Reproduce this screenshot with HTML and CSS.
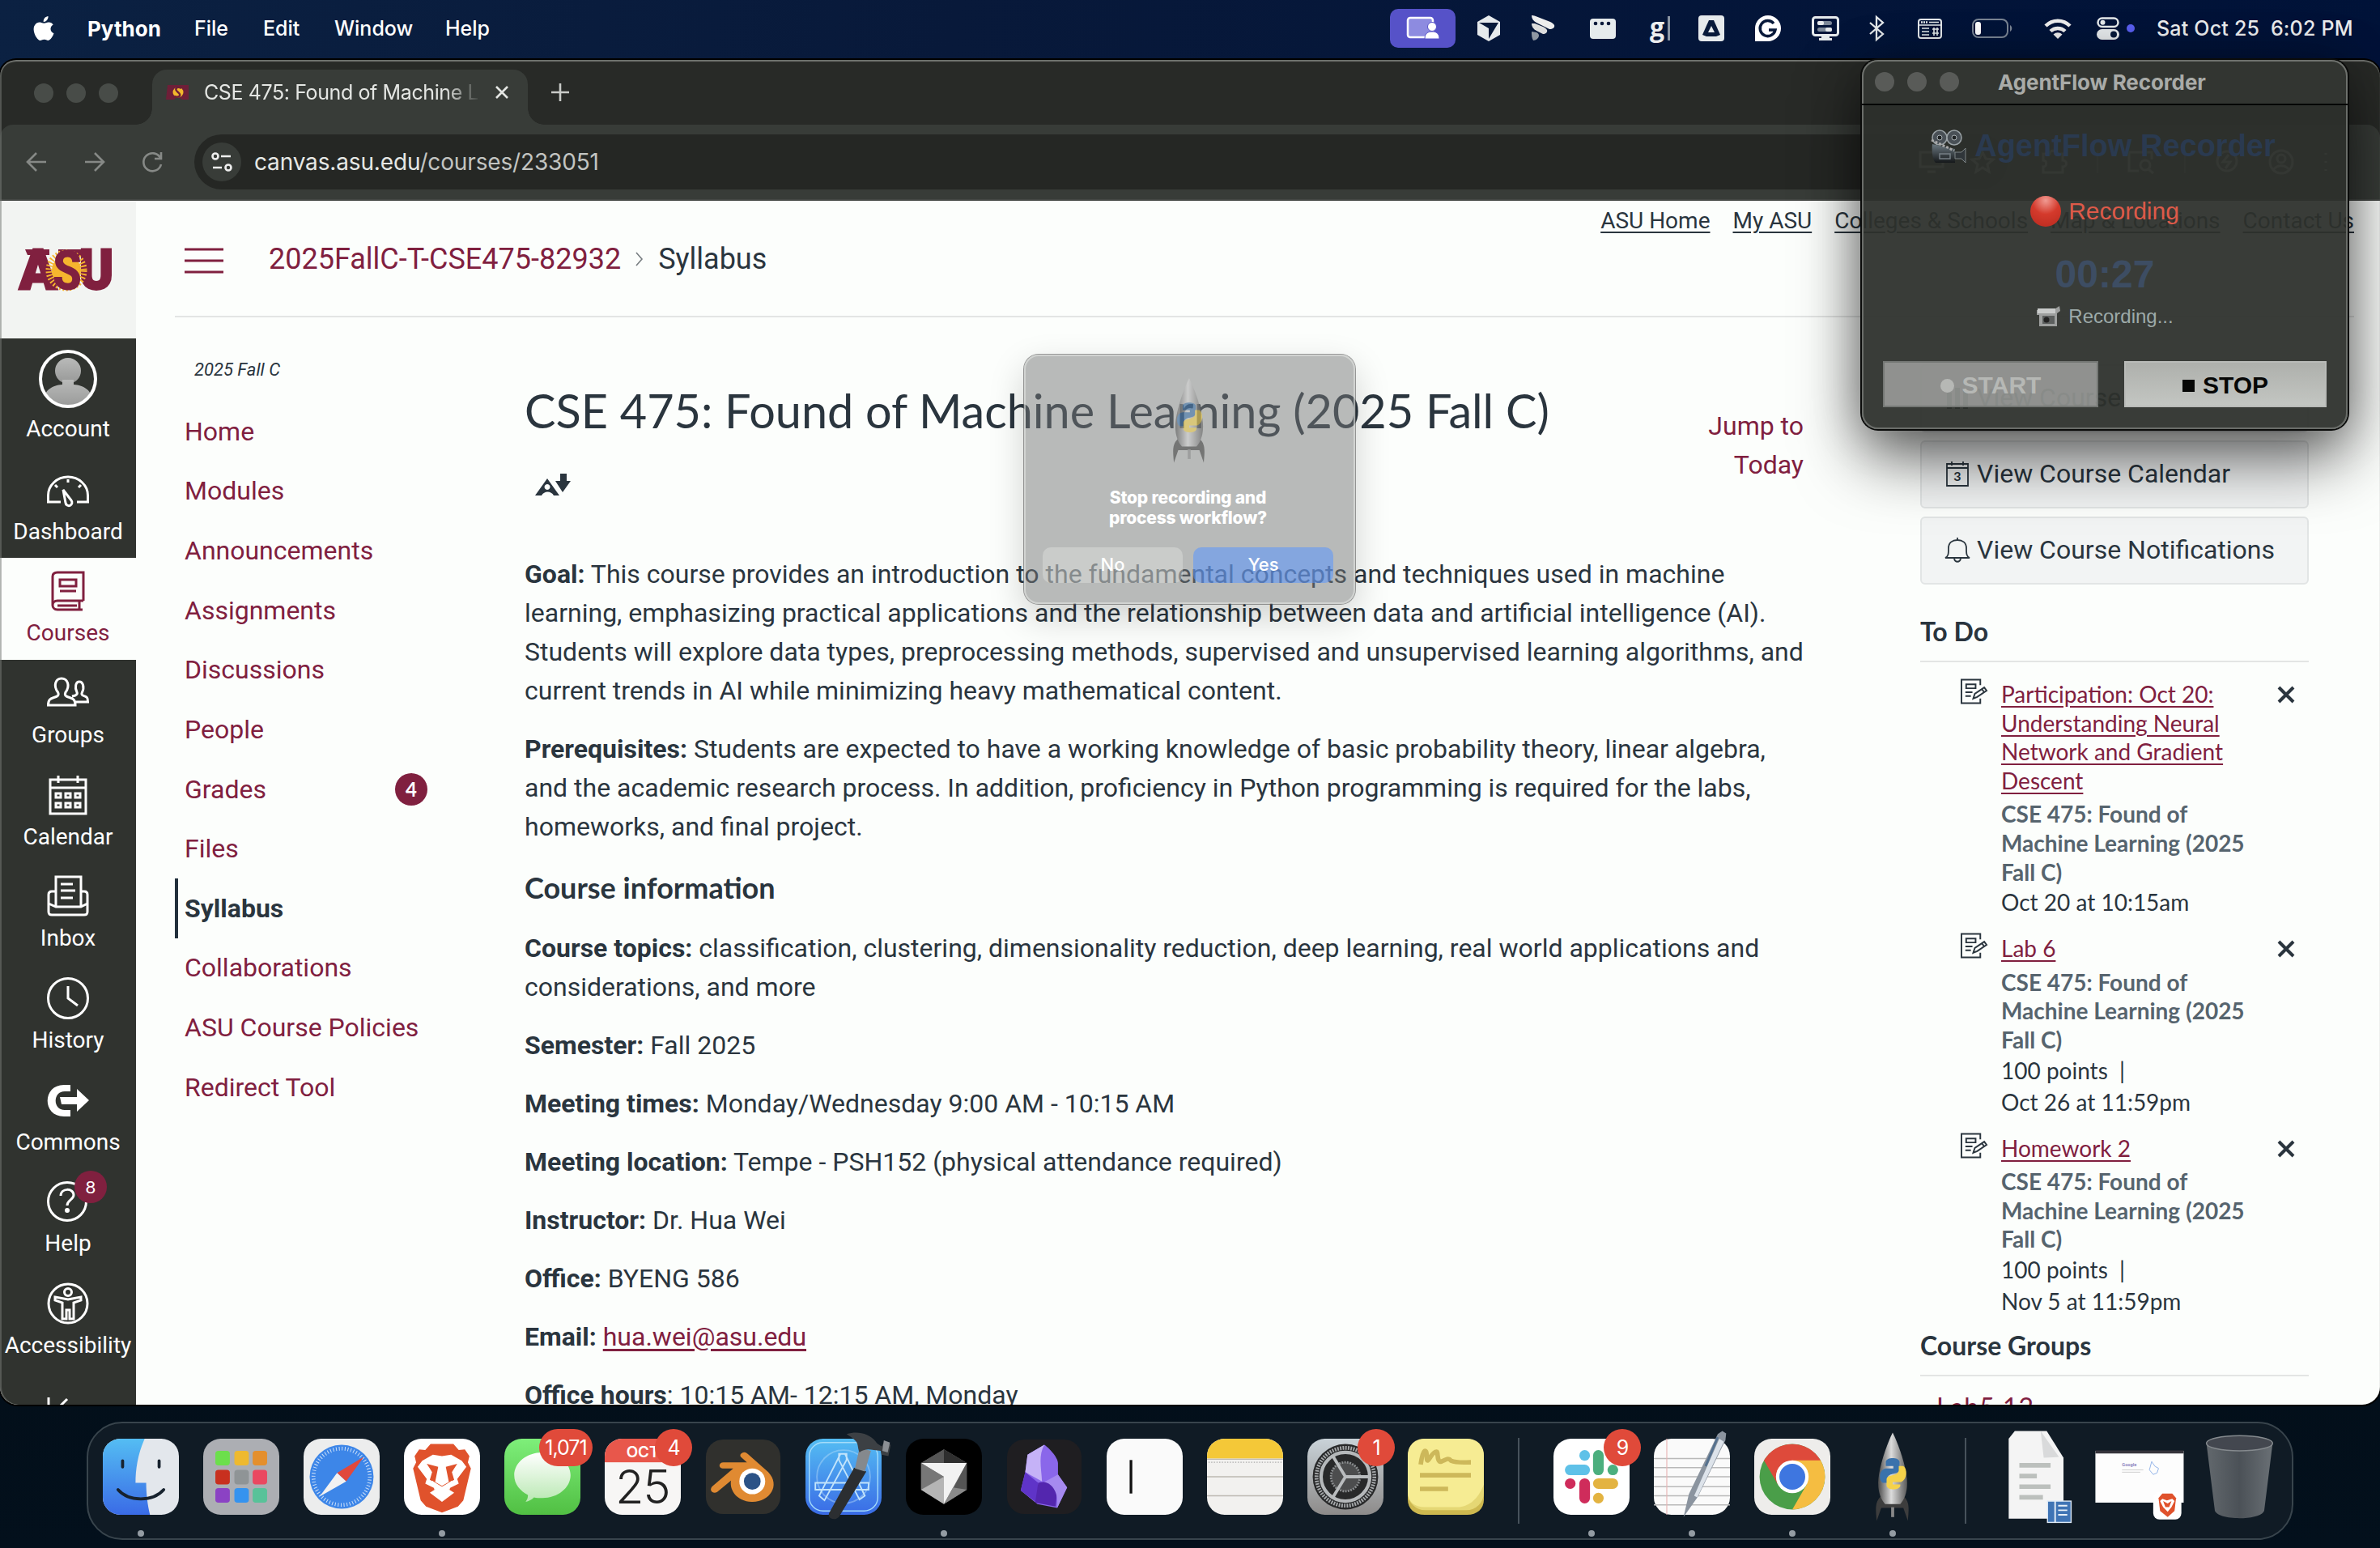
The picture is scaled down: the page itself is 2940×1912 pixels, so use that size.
FILE: index.html
```html
<!DOCTYPE html>
<html lang="en">
<head>
<meta charset="utf-8">
<title>CSE 475: Found of Machine Learning - Syllabus</title>
<link rel="stylesheet" href="styles.css">
</head>
<body>
<header class="menubar">
  <nav class="menus">
    <svg class="apple" viewBox="0 0 26 31" fill="#fff"><path d="M18.500 0c.3 2-.6 3.700-1.600 4.900-1.100 1.300-2.600 2.100-4.200 2-.2-1.900.6-3.600 1.600-4.800C15.400.9 17.100.1 18.500 0zM24.700 10.500c-2.100 1.300-3.200 3-3.200 5.200 0 2.500 1.500 4.600 4 5.500-.6 1.900-1.500 3.700-2.700 5.400-1.200 1.700-2.500 3.400-4.400 3.400s-2.500-1.200-4.800-1.200-3 1.200-4.800 1.200c-1.900.1-3.400-1.800-4.600-3.500C1 22-.9 14.300 2.200 10.700c1.400-2 3.600-3.200 5.900-3.200 2 0 3.700 1.300 5.200 1.300s3.600-1.500 6.200-1.300c2 .1 4 1.100 5.200 3z"/></svg>
    <b class="m-app">Python</b><span class="m-file">File</span><span class="m-edit">Edit</span><span class="m-win">Window</span><span class="m-help">Help</span>
  </nav>
  <div class="status">
    <div class="slot s81"><div class="share"><svg width="42" height="30" viewBox="0 0 42 30"><rect x="2" y="2" width="31" height="24" rx="3" fill="#8d8be0" stroke="#fff" stroke-width="2.500"/><circle cx="32" cy="13" r="5.500" fill="#fff" stroke="#5652c8"/><path d="M23 28c0-7 4-9 9-9s9 2 9 9z" fill="#fff" stroke="#5652c8"/></svg></div></div>
    <div class="slot s80"><svg width="30" height="32" viewBox="0 0 30 32"><path d="M15 0l14 8v16l-14 8-14-8V8z" fill="#e6eaec"/><path d="M3 9h24L15 29V16z" fill="#07193a"/></svg></div>
    <div class="slot s55"><svg width="32" height="32" viewBox="0 0 32 32"><path d="M1 0c0 4 2 7 6 9l16 8c4 0 7-2 6-5-1-2-3-3-5-4L6 1C4 0 2 0 1 0z" fill="#eee"/><path d="M1 10c0 4 2 7 6 9l8 4c3 0 6-2 5-5-1-2-3-3-5-4L5 10z" fill="#ddd"/><path d="M1 20c0 4 0 8 2 11 3 0 7-3 7-6 0-2-1-3-3-4z" fill="#8f97a3"/></svg></div>
    <div class="slot s95"><svg width="32" height="25" viewBox="0 0 32 25"><rect width="32" height="25" rx="4" fill="#e6eaec"/><g fill="#07193a"><circle cx="7" cy="6" r="2.300"/><circle cx="15" cy="6" r="2.300"/><circle cx="23" cy="6" r="2.300"/></g></svg></div>
    <div class="slot s45 gbar">g<i></i></div>
    <div class="slot s83"><svg width="32" height="32" viewBox="0 0 32 32"><rect width="32" height="32" rx="4" fill="#e6eaec"/><path d="M13 6h6l8 18-5 2H10l-5-2z" fill="#07193a"/><path d="M16 13l4 8h-8z" fill="#e6eaec"/></svg></div>
    <div class="slot s57"><svg width="32" height="32" viewBox="0 0 32 32"><path d="M16 0a16 16 0 1 1 0 32H0V16A16 16 0 0 1 16 0z" fill="#fff"/><path d="M23 10a9.500 9.500 0 1 0 2 8h-8" fill="none" stroke="#07193a" stroke-width="3.500"/></svg></div>
    <div class="slot s83"><svg width="34" height="30" viewBox="0 0 34 30"><rect x="1.500" y="1.500" width="31" height="22" rx="3" fill="none" stroke="#e6eaec" stroke-width="3"/><path d="M12 25h10v2h3v3H9v-3h3z" fill="#e6eaec"/><g fill="#7d8998"><rect x="7" y="6" width="18" height="5" rx="2.500"/><rect x="7" y="14" width="18" height="5" rx="2.500"/></g><g fill="#e6eaec"><rect x="7" y="6" width="8" height="5" rx="2"/><rect x="17" y="14" width="8" height="5" rx="2"/></g></svg></div>
    <div class="slot s44"><svg width="20" height="30" viewBox="0 0 20 30"><path d="M2 8l16 14-8 7V1l8 7L2 22" fill="none" stroke="#e6eaec" stroke-width="2.300"/></svg></div>
    <div class="slot s92"><svg width="30" height="25" viewBox="0 0 30 25"><rect x="1" y="1" width="28" height="23" rx="3" fill="none" stroke="#e6eaec" stroke-width="2"/><path d="M4 4.500h8" stroke="#e6eaec" stroke-width="2.500" stroke-dasharray="2 1"/><path d="M14 4.500h12M1 8h28" stroke="#e6eaec" stroke-width="1.500"/><path d="M5 12h9M5 16h9M5 20h9M18 13h8M18 18h8M20 11v10M24 11v10" stroke="#e6eaec" stroke-width="1.600"/></svg></div>
    <div class="slot s60"><svg width="50" height="24" viewBox="0 0 50 24"><rect x="1" y="1" width="43" height="22" rx="7" fill="none" stroke="#7a8594" stroke-width="2"/><path d="M47 8c3 1.500 3 6.500 0 8z" fill="#7a8594"/><rect x="4" y="4" width="7" height="16" rx="3" fill="#fff"/></svg></div>
    <div class="slot s102"><svg width="34" height="25" viewBox="0 0 34 25"><g fill="none" stroke="#eee" stroke-width="4.500"><path d="M2 9a21 21 0 0 1 30 0"/><path d="M8 15.500a13 13 0 0 1 18 0"/></g><path d="M11.500 19.500a8 8 0 0 1 11 0L17 25z" fill="#eee"/></svg></div>
    <div class="slot s22"><svg width="28" height="28" viewBox="0 0 28 28"><rect x="1.500" y="1.500" width="25" height="10.500" rx="5.200" fill="none" stroke="#e6eaec" stroke-width="2.500"/><circle cx="7.500" cy="6.700" r="3" fill="#e6eaec"/><rect y="15" width="28" height="13" rx="6.500" fill="#e6eaec"/><circle cx="21" cy="21.500" r="4" fill="#07193a"/></svg></div>
    <div class="slot s35"><i class="bluedot"></i></div>
    <span class="clock">Sat Oct 25&nbsp; 6:02 PM</span>
  </div>
</header>

<main class="browser">
  <div class="tabstrip">
    <div class="lights"><i></i><i></i><i></i></div>
    <div class="tab">
      <svg class="fav" width="30" height="18" viewBox="0 0 30 18"><path d="M2 0h26v18H20l-6-4-4 4H0z" fill="#6e1f38"/><circle cx="15" cy="9" r="6.500" fill="#f2b92c"/><path d="M19 4c-6-3-9 1-4 5s1 7-5 5" fill="none" stroke="#6e1f38" stroke-width="2.500"/></svg>
      <span class="tabtitle">CSE 475: Found of Machine L</span>
      <svg class="tabx" width="16" height="16" viewBox="0 0 16 16"><path d="M1 1l14 14M15 1L1 15" stroke="#e4e6e3" stroke-width="2.600"/></svg>
    </div>
    <svg class="plus" width="22" height="22" viewBox="0 0 22 22"><path d="M11 0v22M0 11h22" stroke="#c9cbc8" stroke-width="2.600"/></svg>
  </div>
  <div class="toolbar">
    <svg class="navi" viewBox="0 0 28 28"><path d="M26 14H3M14 3L3 14l11 11"/></svg>
    <svg class="navi" viewBox="0 0 28 28"><path d="M2 14h23M14 3l11 11-11 11"/></svg>
    <svg class="navi" viewBox="0 0 28 28"><path d="M24 9A11 11 0 1 0 25 17M25 2v8h-8"/></svg>
    <div class="omni">
      <span class="site"><svg width="26" height="24" viewBox="0 0 26 24" fill="none" stroke="#eee" stroke-width="2.600"><circle cx="5" cy="5" r="3.500"/><path d="M12 5h12M2 19h11"/><circle cx="21" cy="19" r="3.500"/></svg></span>
      <span class="url">canvas.asu.edu<em>/courses/233051</em></span>
      <span class="omni-end">
        <svg width="32" height="30" viewBox="0 0 32 30"><path d="M20 3H2v18h28V14M11 27h10M25 2v10M20 8l5 5 5-5"/></svg>
        <svg width="30" height="30" viewBox="0 0 30 30"><path d="M15 3l4 8 9 1-7 6 2 9-8-5-8 5 2-9-7-6 9-1z"/></svg>
      </span>
    </div>
    <div class="exts">
      <svg width="32" height="30" viewBox="0 0 32 30"><path d="M2 5h8c0-5 8-5 8 0h8v8c6 0 6 8 0 8v7H2v-7c5 0 5-8 0-8z"/></svg><i></i>
      <svg width="34" height="30" viewBox="0 0 34 30"><path d="M14 26H2V3h28v9"/><circle cx="22" cy="19" r="6"/><path d="M26 24l6 5"/></svg><i></i>
      <svg width="30" height="30" viewBox="0 0 30 30"><circle cx="15" cy="14" r="12"/><path d="M17 6l-7 9h9l-6 8"/></svg>
      <svg width="32" height="32" viewBox="0 0 32 32"><circle cx="16" cy="16" r="14"/><circle cx="16" cy="12" r="5"/><path d="M6 26c5-7 15-7 20 0"/></svg>
      <svg width="6" height="28" viewBox="0 0 6 28"><path d="M3 3v2M3 13v2M3 23v2"/></svg>
    </div>
  </div>

  <div class="page">
    <nav class="global">
      <a class="logo"><svg width="120" height="54" viewBox="0 0 120 54">
        <g font-family="Roboto, sans-serif" font-weight="900" font-size="68" fill="#80203f" stroke="#80203f" stroke-width="3">
          <text x="0" y="50" textLength="46" lengthAdjust="spacingAndGlyphs">A</text><text x="74" y="50" textLength="42" lengthAdjust="spacingAndGlyphs">U</text></g>
        <path d="M7 1h30v7H10zM48 1h36v8H48z" fill="#80203f"/>
        <circle cx="58" cy="27" r="18" fill="#f6b52e"/><circle cx="58" cy="27" r="21.500" fill="none" stroke="#f6b52e" stroke-width="8" stroke-dasharray="1.800 2.200"/>
        <text x="41" y="51" font-family="Roboto, sans-serif" font-weight="900" font-size="68" fill="#80203f" textLength="36" lengthAdjust="spacingAndGlyphs">S</text>
      </svg></a>
      <a class="g acct"><svg viewBox="0 0 72 72"><defs><clipPath id="av"><circle cx="36" cy="36" r="33"/></clipPath><linearGradient id="avg" x2="0" y2="1"><stop stop-color="#b9bab9"/><stop offset="1" stop-color="#979897"/></linearGradient></defs><g clip-path="url(#av)" fill="url(#avg)"><circle cx="36" cy="26" r="16"/><path d="M4 72c0-22 12-28 25-29v-6h14v6c13 1 25 7 25 29z"/></g><circle cx="36" cy="36" r="34" fill="none" stroke="#fff" stroke-width="4"/></svg><span>Account</span></a>
      <a class="g"><svg viewBox="0 0 52 52"><path d="M17 41H1.500V33a24.500 23 0 0 1 49 0v8H37M20 26l10 13a4 4 0 1 1-7 3zM10 20l3 3M42 20l-3 3M26 13v4"/></svg><span>Dashboard</span></a>
      <a class="g on"><svg viewBox="0 0 52 52"><path d="M45 38V3H13c-4 0-6 2-6 5v36M45 38H13c-8 0-8 11 0 11h31M40 39v9M13 44h24M16 12h20v8H16zM16 26h20"/></svg><span>Courses</span></a>
      <a class="g"><svg viewBox="0 0 52 52"><path d="M1.500 41c0-9 4-8 11-11 2-1 2-3 1-5-6-8-3-17 4.500-17S29 17 23 25c-1 2-1 4 1 5 7 3 11 2 11 11zM35 37h15.500c0-7-2-6-6-8-2-1-2-2-1-4 3-6 1-13-3.500-13s-6 7-3 13c1 2 0 3-2 4l-4 1"/></svg><span>Groups</span></a>
      <a class="g"><svg viewBox="0 0 52 52"><path d="M4 7h44v42H4zM4 17h44M14 2v9M38 2v9"/><path d="M11 24h6v5h-6zM23 24h6v5h-6zM35 24h6v5h-6zM11 36h6v5h-6zM23 36h6v5h-6zM35 36h6v5h-6z"/></svg><span>Calendar</span></a>
      <a class="g"><svg viewBox="0 0 52 52"><path d="M11 38V2h31v36M17 11h15M17 19h18M17 28h15M11 20H6c-3 0-4 2-4 4v21c0 3 1 4 4 4h40c3 0 4-1 4-4V24c0-2-1-4-4-4h-4M2 35l9 4h31l8-4"/></svg><span>Inbox</span></a>
      <a class="g"><svg viewBox="0 0 52 52"><circle cx="26" cy="26" r="24.500"/><path d="M26 11v15l12 9"/></svg><span>History</span></a>
      <a class="g"><svg viewBox="0 0 52 52"><path class="solid" d="M29 7H21C-6 7-6 46 21 46h8v-8h-7c-15 0-15-23 0-23h7zM16 22h21v-10l15 14-15 14V31H18z"/></svg><span>Commons</span></a>
      <a class="g"><svg viewBox="0 0 52 52"><circle cx="25" cy="26" r="23.500"/><path d="M17 19c0-10 16-10 16-1 0 6-8 6-8 13"/><circle class="solid" cx="25" cy="37" r="3"/></svg><span>Help</span><b class="badge">8</b></a>
      <a class="g"><svg viewBox="0 0 52 52"><circle cx="26" cy="26" r="24"/><circle cx="26" cy="12" r="4.500"/><path d="M10 18l16 3 16-3v4l-9 3v20h-5V34h-4v11h-5V25l-9-3z"/></svg><span>Accessibility</span></a>
      <a class="g"><svg viewBox="0 0 52 52"><path d="M2 16v34M12 31L25 18"/></svg></a>
    </nav>

    <div class="doc">
      <div class="crumbs">
        <svg class="burger" width="48" height="32" viewBox="0 0 48 32"><path d="M0 2h48M0 16h48M0 30h48" stroke="#80203f" stroke-width="3"/></svg>
        <a class="c1">2025FallC-T-CSE475-82932</a><svg width="10" height="18" viewBox="0 0 10 18"><path d="M1 1l7 8-7 8" fill="none" stroke="#777d80" stroke-width="1.600"/></svg><span class="c2">Syllabus</span>
        <div class="toplinks"><a class="l1">ASU Home</a><a class="l2">My ASU</a><a class="l3">Colleges &amp; Schools</a><a class="l4">Map &amp; Locations</a><a class="l5">Contact Us</a></div>
      </div>
      <div class="cols">
        <nav class="course">
          <div class="term">2025 Fall C</div>
          <a>Home</a><a>Modules</a><a>Announcements</a><a>Assignments</a><a>Discussions</a><a>People</a><a>Grades<b class="badge2">4</b></a><a>Files</a><a class="cur">Syllabus</a><a>Collaborations</a><a>ASU Course Policies</a><a>Redirect Tool</a>
        </nav>
        <article class="content">
          <div class="head"><div><h1>CSE 475: Found of Machine Learning (2025 Fall C)</h1>
            <svg class="ally" width="44" height="28" viewBox="0 0 44 28"><path fill-rule="evenodd" d="M0 27L15 6l15 21h-7c-3-6-12-6-15 0zM15 13a3.500 3.500 0 1 0 .1 0zM31 0h8v9h5L34 23 25 9h6z" fill="#2a353e"/></svg></div>
            <a class="jump">Jump to<br>Today</a></div>
          <p><b>Goal:</b> This course provides an introduction to the fundamental concepts and techniques used in machine<br>learning, emphasizing practical applications and the relationship between data and artificial intelligence (AI).<br>Students will explore data types, preprocessing methods, supervised and unsupervised learning algorithms, and<br>current trends in AI while minimizing heavy mathematical content.</p>
          <p><b>Prerequisites:</b> Students are expected to have a working knowledge of basic probability theory, linear algebra,<br>and the academic research process. In addition, proficiency in Python programming is required for the labs,<br>homeworks, and final project.</p>
          <h3>Course information</h3>
          <p><b>Course topics:</b> classification, clustering, dimensionality reduction, deep learning, real world applications and<br>considerations, and more</p>
          <p><b>Semester:</b> Fall 2025</p>
          <p><b>Meeting times:</b> Monday/Wednesday 9:00 AM - 10:15 AM</p>
          <p><b>Meeting location:</b> Tempe - PSH152 (physical attendance required)</p>
          <p><b>Instructor:</b> Dr. Hua Wei</p>
          <p><b>Office:</b> BYENG 586</p>
          <p><b>Email:</b> <a class="mail">hua.wei@asu.edu</a></p>
          <p><b>Office hours</b>: 10:15 AM- 12:15 AM, Monday</p>
        </article>
        <aside class="right">
          <a class="btn"><svg width="32" height="32" viewBox="0 0 32 32"><path d="M3 10v20h6V10zM13 4v26h6V4zM23 8v22h6V8z" fill="#2a353e"/></svg>View Course Stream</a>
          <a class="btn"><svg width="32" height="32" viewBox="0 0 32 32" fill="none" stroke="#2a353e" stroke-width="1.800"><path d="M3 4h26v27H3zM3 9h26M9 1v5M23 1v5"/><text x="16" y="25" font-family="Lato, sans-serif" font-size="16" font-weight="700" stroke="none" fill="#2a353e" text-anchor="middle">3</text></svg>View Course Calendar</a>
          <a class="btn"><svg width="32" height="32" viewBox="0 0 32 32" fill="none" stroke="#2a353e" stroke-width="1.800"><path d="M1 26h30c-4-2-4-5-4-12 0-7-5-10-11-10S5 7 5 14c0 7 0 10-4 12zM16 1v3M12 27c1 5 7 5 8 0"/></svg>View Course Notifications</a>
          <h2>To Do</h2>
          <div class="todo"><svg class="asg" viewBox="0 0 34 32"><use href="#asg"/></svg><div><a>Participation: Oct 20:<br>Understanding Neural<br>Network and Gradient<br>Descent</a><b>CSE 475: Found of<br>Machine Learning (2025<br>Fall C)</b><span>Oct 20 at 10:15am</span></div><svg class="x" viewBox="0 0 20 20"><use href="#xx"/></svg></div>
          <div class="todo"><svg class="asg" viewBox="0 0 34 32"><use href="#asg"/></svg><div><a>Lab 6</a><b>CSE 475: Found of<br>Machine Learning (2025<br>Fall C)</b><span>100 points &nbsp;|</span><span>Oct 26 at 11:59pm</span></div><svg class="x" viewBox="0 0 20 20"><use href="#xx"/></svg></div>
          <div class="todo"><svg class="asg" viewBox="0 0 34 32"><use href="#asg"/></svg><div><a>Homework 2</a><b>CSE 475: Found of<br>Machine Learning (2025<br>Fall C)</b><span>100 points &nbsp;|</span><span>Nov 5 at 11:59pm</span></div><svg class="x" viewBox="0 0 20 20"><use href="#xx"/></svg></div>
          <h2 class="grp">Course Groups</h2>
          <a class="lab">Lab5 12</a>
        </aside>
      </div>
    </div>
  </div>
</main>
<svg width="0" height="0" class="defs"><defs>
  <g id="asg" fill="none" stroke="#2a353e" stroke-width="2"><path d="M25 8V1H1v30h24v-6M7 7h12v5H7zM6 17h9M6 22h7"/><path d="M16 25l2-6 12-8 3 4-12 8zM27 13l3 4"/></g>
  <g id="xx" fill="none" stroke="#2a353e" stroke-width="4"><path d="M1 1l18 18M19 1L1 19"/></g>
</defs></svg>

<footer class="dock">
  <div class="app run"><svg viewBox="0 0 100 100"><defs><linearGradient id="fb" x2="0" y2="1"><stop stop-color="#54bdf3"/><stop offset="1" stop-color="#3a6be6"/></linearGradient><clipPath id="rr"><rect width="100" height="100" rx="23"/></clipPath></defs><g clip-path="url(#rr)"><rect width="100" height="100" fill="#e3e7ec"/><path d="M0 0h55c-9 20-12 40-12 58h14c0 15 2 30 5 42H0z" fill="url(#fb)"/></g><path d="M26 29v8M74 29v8M20 67c14 16 46 16 60 0" fill="none" stroke="#17222e" stroke-width="4" stroke-linecap="round"/></svg></div>
  <div class="app"><svg viewBox="0 0 100 100"><rect width="100" height="100" rx="23" fill="#acaeb3"/><g><rect x="16" y="16" width="19" height="19" rx="4" fill="#6cdf4c"/><rect x="41" y="16" width="19" height="19" rx="4" fill="#eeb930"/><rect x="65" y="16" width="19" height="19" rx="4" fill="#e48f2d"/><rect x="16" y="41" width="19" height="19" rx="4" fill="#c8301f"/><rect x="41" y="41" width="19" height="19" rx="4" fill="#8f9496"/><rect x="65" y="41" width="19" height="19" rx="4" fill="#ea4860"/><rect x="16" y="65" width="19" height="19" rx="4" fill="#8b42c4"/><rect x="41" y="65" width="19" height="19" rx="4" fill="#3593ef"/><rect x="65" y="65" width="19" height="19" rx="4" fill="#58c299"/></g></svg></div>
  <div class="app"><svg viewBox="0 0 100 100"><rect width="100" height="100" rx="23" fill="#eceded"/><circle cx="50" cy="50" r="42" fill="#3d86e8"/><circle cx="50" cy="50" r="37" fill="none" stroke="#d5e6fa" stroke-width="5" stroke-dasharray="1 2.875"/><path d="M79 24L44 45l12 11z" fill="#e1483c"/><path d="M21 76l23-31 12 11z" fill="#f2f2f2"/></svg></div>
  <div class="app run"><svg viewBox="0 0 100 100"><rect width="100" height="100" rx="23" fill="#fff"/><path d="M35 7h30l7 8 8-1 6 9-2 8 4 8-10 42-7 8-21 8-21-8-7-8-10-42 4-8-2-8 6-9 8 1z" fill="#e0522c"/><path d="M50 23l12-2 14 8 6 8-12 16 2 6-14 7 8 5-16 12-16-12 8-5-14-7 2-6-12-16 6-8 14-8z" fill="#fff"/><path d="M30 33l15 4-4 20 9 5 9-5-4-20 15-4-7 11 3 10-16 9-16-9 3-10z" fill="#e0522c"/><path d="M50 35l4 2 1 20-5 4-5-4 1-20zM37 55l13 9 13-9-3 12-10-2-10 2z" fill="#fff"/></svg></div>
  <div class="app"><svg viewBox="0 0 100 100"><defs><linearGradient id="mg" x2="0" y2="1"><stop stop-color="#7eee7a"/><stop offset="1" stop-color="#51bf43"/></linearGradient><linearGradient id="mb" x2="0" y2="1"><stop stop-color="#fff"/><stop offset="1" stop-color="#b9e8b2"/></linearGradient></defs><rect width="100" height="100" rx="23" fill="url(#mg)"/><path d="M50 18c20 0 37 13 37 30S70 78 50 78c-4 0-8 0-11-1-3 3-7 5-11 6 3-4 3-7 3-9-10-5-18-14-18-26 0-17 17-30 37-30z" fill="url(#mb)"/></svg><b class="count wide">1,071</b></div>
  <div class="app"><svg viewBox="0 0 100 100"><g clip-path="url(#rr)"><rect width="100" height="100" fill="#f7f6f5"/><rect width="100" height="31" fill="#e8574b"/></g><text x="50" y="24" text-anchor="middle" font-family="Inter, sans-serif" font-size="20" font-weight="600" fill="#fff">OCT</text><text x="50" y="85" text-anchor="middle" font-family="Inter, sans-serif" font-size="61" font-weight="300" letter-spacing="-1" fill="#222">25</text></svg><b class="count">4</b></div>
  <div class="app"><svg viewBox="0 0 100 100"><rect x="1" y="1" width="98" height="98" rx="23" fill="#30302d"/><path d="M47 20c3-3 6-3 9 0l27 24c17 18 1 40-22 39-19-1-29-15-27-28L16 70c-6 3-11-2-7-7l28-24H23c-6-1-5-8 1-8h31l-8-7c-1-1-1-3 0-4z" fill="#e08a32"/><circle cx="62" cy="56" r="17" fill="#fff"/><circle cx="62" cy="56" r="11" fill="#2b5286"/></svg></div>
  <div class="app"><svg viewBox="0 0 100 100"><rect width="100" height="100" rx="23" fill="url(#fb)"/><rect x="5" y="5" width="90" height="90" rx="18" fill="none" stroke="#a4dcfa" stroke-width="1.500"/><g fill="none" stroke="#c2e4fb" stroke-width="2"><circle cx="50" cy="50" r="35" opacity=".4"/><path d="M44 20h8l26 55-7 5-27-52zM54 20h-8L18 75l7 6 29-53zM13 58h70v9H13z"/></g><path d="M64 38l16 5L45 101c-4 8-17 5-14-3z" fill="#2b2e31"/><path d="M71 12l15 4-8 27-13-4z" fill="#85898d"/><path d="M54-6c16-5 32 0 40 12l6 4 3-5 9 3-3 15-9-2-1-5-9-1c-8-2-14-1-19 3-3-7-1-12-6-16-3-3-7-5-11-8z" fill="#3c4044"/><path d="M103 2l8 3-3 13-7-2z" fill="#8b8f94"/></svg></div>
  <div class="app run"><svg viewBox="0 0 100 100"><rect width="100" height="100" rx="23" fill="#000"/><path d="M50 14l30 18v35L50 86 20 67V32z" fill="#777"/><path d="M50 14L20 32h60z" fill="#555"/><path d="M50 14v18h30z" fill="#2e2e2e"/><path d="M20 32h60L50 86V50z" fill="#f2f2f2"/><path d="M20 32l30 18-30 17z" fill="#777"/><path d="M50 50v36L20 67z" fill="#b5b5b5"/><path d="M80 32v35L62 66z" fill="#555"/><path d="M80 67L50 86l12-22z" fill="#8a8a8a"/></svg></div>
  <div class="app"><svg viewBox="0 0 100 100"><rect x="1" y="1" width="98" height="98" rx="23" fill="#1f1e21"/><path d="M50 8c4 2 18 16 18 24v15l12 17-13 27-26-5-22-18 6-24 3-23z" fill="#8a67ea"/><path d="M50 8c-8 15-4 30-3 48l-22-12 3-23z" fill="#c5b2f7"/><path d="M25 44l17 14-2 26-21-16z" fill="#5f34c8"/><path d="M42 58c10-3 20 0 25 9l-2 22-27-5z" fill="#5326ae"/><path d="M68 47l12 17-13 27c2-20-6-32-17-34z" fill="#a68af0"/></svg></div>
  <div class="app"><svg viewBox="0 0 100 100"><rect width="100" height="100" rx="23" fill="#fafafa"/><path d="M32 28v44" stroke="#111" stroke-width="3.500"/></svg></div>
  <div class="app"><svg viewBox="0 0 100 100"><g clip-path="url(#rr)"><rect width="100" height="100" fill="#f2f1ef"/><rect width="100" height="26" fill="#f4c838"/><path d="M0 27h100M0 50h100M0 75h100" stroke="#bdb9b2" stroke-width="1.500"/><path d="M2 31h96" stroke="#aaa" stroke-width="1.500" stroke-dasharray="1.500 2"/></g></svg></div>
  <div class="app"><svg viewBox="0 0 100 100"><defs><linearGradient id="sg" x2="0" y2="1"><stop stop-color="#c9d2d8"/><stop offset="1" stop-color="#8d8b8a"/></linearGradient></defs><rect width="100" height="100" rx="23" fill="url(#sg)"/><circle cx="50" cy="50" r="43" fill="#28292a"/><circle cx="50" cy="50" r="38" fill="none" stroke="#a5a8aa" stroke-width="5" stroke-dasharray="2 1.500"/><circle cx="50" cy="50" r="32" fill="none" stroke="#b5b8ba" stroke-width="4.500"/><circle cx="50" cy="50" r="19" fill="#4c4d4e" stroke="#8b8e90" stroke-width="3" stroke-dasharray="2 1.500"/><path d="M50 50h31M50 50L33 22M50 50L33 78" stroke="#b9bcbe" stroke-width="4"/></svg><b class="count">1</b></div>
  <div class="app"><svg viewBox="0 0 100 100"><path d="M0 60v20c0 12 9 20 22 20h56c13 0 22-8 22-20V60z" fill="#cdb84f"/><rect width="100" height="94" rx="23" fill="#e5d774"/><path d="M22 0h56c13 0 22 9 22 22v38c-8 20-18 27-32 30H22C9 90 0 83 0 70V22C0 9 9 0 22 0z" fill="#f6ec93"/><path d="M17 34c3-22 8-22 8-10 0 14 6-8 13-7 2 0 0 15 6 13s9-6 13-1c7 3 16 2 26 2M16 48h67M16 66h37" fill="none" stroke="#cdb85a" stroke-width="6"/></svg></div>
  <i class="sep"></i>
  <div class="app run"><svg viewBox="0 0 100 100"><rect width="100" height="100" rx="23" fill="#fff"/><g stroke-width="14" stroke-linecap="round"><path d="M22 41h19" stroke="#5fc1e8"/><path d="M41 22v0" stroke="#5fc1e8"/><path d="M59 22v19" stroke="#4caf7e"/><path d="M78 41v0" stroke="#4caf7e"/><path d="M78 59H59" stroke="#e3b341"/><path d="M59 78v0" stroke="#e3b341"/><path d="M41 78V59" stroke="#cf2c5b"/><path d="M22 59v0" stroke="#cf2c5b"/></g></svg><b class="count">9</b></div>
  <div class="app run"><svg viewBox="0 0 100 100"><rect width="100" height="100" rx="23" fill="#fafafa"/><path d="M0 26h100M0 38h100M0 50h100M0 63h100M0 75h100M0 87h100" stroke="#b9b9b9" stroke-width="1.500"/><path d="M17 0v100" stroke="#e8b4b4" stroke-width="1.200"/><path d="M84-6l6-4 5 3-1 9-36 74-19 27 7-30z" fill="#8b949f"/><path d="M86 0L53 75l4 2L92 4z" fill="#dde3ea"/><path d="M84 -2L68 36" stroke="#55718f" stroke-width="3"/></svg></div>
  <div class="app run"><svg viewBox="0 0 100 100"><rect width="100" height="100" rx="23" fill="#eeedeb"/><circle cx="50" cy="50" r="43" fill="#4a9e49"/><path d="M50 50L12.800 28.500A43 43 0 0 1 87.200 28.500z" fill="#de4a3b"/><path d="M50 28.500h37.200A43 43 0 0 1 50 93L69 60z" fill="#f5bd41"/><path d="M12.800 28.500L31 60l19-31.500z" fill="#de4a3b"/><circle cx="50" cy="50" r="21.500" fill="#fff"/><circle cx="50" cy="50" r="17" fill="#3e76e0"/></svg></div>
  <div class="app run"><svg viewBox="0 0 100 100"><use href="#rocket"/></svg></div>
  <i class="sep"></i>
  <div class="app"><svg viewBox="-2 0 100 100"><path d="M17-10h42l22 35v80H9V0z" fill="#f4f4f4"/><path d="M51-10l24 34-20 1z" fill="#d9dadb"/><path d="M23 35h41M23 49h23M23 63h41M23 77h31" stroke="#bcc0bd" stroke-width="6"/><rect x="60" y="82" width="31" height="28" fill="#3f74b5" stroke="#dce8f5" stroke-width="1.500"/><path d="M70 82v28M74 88h12M74 94h12M74 100h12" stroke="#e8f0f8" stroke-width="2"/></svg></div>
  <div class="app"><svg viewBox="-1 0 100 100"><rect x="-8" y="16" width="116" height="68" fill="#fdfdfd"/><path d="M-8 17.500h116" stroke="#36343c" stroke-width="4"/><text x="27" y="36" font-size="6" font-family="Roboto, sans-serif" font-weight="700" fill="#8d85c0">Google</text><path d="M27 41h28M27 44h24" stroke="#ccc"/><path d="M66 30l4 6 5 3-2 6-5 2-5-6z" fill="none" stroke="#8eb0e8"/><rect x="68" y="70" width="37" height="36" rx="8" fill="#fff"/><path d="M80 72h13l5 6-2 17-9 8-10-8-2-17z" fill="#e0522c"/><path d="M80 79l6 2 7-2 3 3-4 8-5 6-6-6-4-8z" fill="#fff"/><path d="M81 82l6 3 5-3-3 8h-5z" fill="#e0522c"/></svg></div>
  <div class="app"><svg viewBox="0 0 100 100"><defs><linearGradient id="tg"><stop stop-color="#62686d"/><stop offset=".5" stop-color="#4b5157"/><stop offset="1" stop-color="#6a7075"/></linearGradient></defs><path d="M7 6l11 88c2 14 63 14 65 0L94 6z" fill="url(#tg)"/><ellipse cx="50.500" cy="6" rx="43.500" ry="10" fill="#43474f" stroke="#858a8e" stroke-width="1.500"/></svg></div>
</footer>

<svg width="0" height="0" class="defs"><defs>
  <linearGradient id="rk"><stop stop-color="#4c4c4c"/><stop offset=".45" stop-color="#dcdcdc"/><stop offset="1" stop-color="#5a5a5a"/></linearGradient>
  <g id="rocket"><path d="M34 76c-8 8-6 18-5 32l6-17h29l6 17c1-14 3-24-5-32z" fill="#3d3d3d"/><path d="M50-8c10 20 19 50 19 66 0 14-4 22-9 28H40c-5-6-9-14-9-28C31 42 40 12 50-8z" fill="url(#rk)"/><path d="M48 90h4v13h-4z" fill="#888"/><path d="M41 30c1-6 17-6 18 0v10c0 8-15 4-16 12v6h-6c-6-4-5-18 4-19h10v-3H41z" fill="#3a72ac"/><path d="M60 62c-1 6-17 6-18 0V54c0-8 15-4 16-12v-6h6c6 4 5 18-3 21H50v3h10z" fill="#f5d24a"/></g>
</defs></svg>

<section class="recorder">
  <div class="rtitle"><div class="lights"><i></i><i></i><i></i></div><b>AgentFlow Recorder</b></div>
  <div class="rhead"><svg width="44" height="42" viewBox="0 0 44 42"><defs><linearGradient id="cg" x2="0" y2="1"><stop stop-color="#6b7880"/><stop offset="1" stop-color="#15181a"/></linearGradient></defs><g fill="#495056" stroke="#9aa2a6" stroke-width="1.500"><circle cx="11" cy="10" r="9"/><circle cx="29" cy="10" r="9"/></g><circle cx="11" cy="10" r="3" fill="#1f2324" stroke="#a8b0b4"/><circle cx="29" cy="10" r="3" fill="#1f2324" stroke="#a8b0b4"/><path d="M2 18l28 6v17H6c-4-4-5-15-4-23z" fill="url(#cg)"/><path d="M1 13l28 13" stroke="#a9a9a9" stroke-width="3" stroke-dasharray="3 2"/><path d="M30 28h8l5-5v18l-5-5h-8z" fill="#30363a" stroke="#7d8486"/><rect x="11" y="30" width="13" height="6" fill="none" stroke="#767f85" stroke-width="1.500"/></svg><b>AgentFlow Recorder</b></div>
  <div class="rrec"><i></i><span>Recording</span></div>
  <div class="rtime">00:27</div>
  <div class="rsub"><svg width="32" height="28" viewBox="0 0 32 28"><path d="M1 6h20l8-5 1 6-4 3v16H4V12H1z" fill="#9d9f9e"/><path d="M2 4h22v6H2z" fill="#c9cbca"/><rect x="8" y="13" width="15" height="10" fill="#5c5f5e"/><circle cx="13" cy="18" r="3.500" fill="#222"/></svg><span>Recording...</span></div>
  <div class="rbtns"><div class="start"><i></i>START</div><div class="stop"><i></i>STOP</div></div>
</section>

<section class="dialog">
  <svg class="drk" viewBox="0 0 100 120"><g transform="translate(0 8)"><use href="#rocket"/></g></svg>
  <p>Stop recording and<br>process workflow?</p>
  <div class="dbtns"><span class="no">No</span><span class="yes">Yes</span></div>
</section>
</body>
</html>
```
FILE: styles.css
```css
* { box-sizing: border-box; }
body {
  margin: 0; width: 2940px; height: 1912px; overflow: hidden; position: relative;
  display: flex; flex-direction: column; align-items: center;
  background: linear-gradient(100deg, #0b2142 0%, #08193a 40%, #001238 100%) top / 100% 120px no-repeat, linear-gradient(#000509, #03101c);
  font-family: Roboto, "Liberation Sans", sans-serif; color: #2a353e;
}
svg { display: block; flex: none; overflow: visible; }
i, em { font-style: normal; }
.defs { position: absolute; }

/* menu bar */
.menubar { width: 2940px; height: 74px; flex: none; display: flex; align-items: center; justify-content: space-between; padding: 0 33px 4px 41px; color: #fff; font: 500 25px Inter, sans-serif; white-space: nowrap; }
.menus { display: flex; align-items: center; }
.apple { width: 26px; height: 31px; margin-right: 41px; }
.menus b, .menus span { flex: none; }
.m-app { width: 132px; font-weight: 700; font-size: 26px; }
.m-file { width: 85px; }
.m-edit { width: 88px; }
.m-win { width: 137px; }
.status { display: flex; align-items: center; color: #eceeef; }
.slot { display: flex; align-items: center; justify-content: flex-start; }
.s81 { width: 107px; } .s80 { width: 67px; } .s55 { width: 73px; } .s95 { width: 74px; } .s45 { width: 60px; } .s83 { width: 70px; } .s57 { width: 70px; }
.slot.s44 { width: 61px; } .s92 { width: 67px; } .s60 { width: 89px; } .s102 { width: 65px; } .s22 { width: 37px; } .s35 { width: 37px; }
.share { width: 81px; height: 48px; border-radius: 10px; background: #5652c8; display: flex; align-items: center; justify-content: center; }
.gbar { font: 700 32px/34px "Open Sans", sans-serif; gap: 4px; padding-bottom: 4px; }
.gbar i { width: 3px; height: 30px; background: #8a94a2; margin-top: 4px; }
.bluedot { width: 10px; height: 10px; border-radius: 50%; background: #5a5ff0; }
.clock { width: 243px; letter-spacing: .2px; }

/* browser window */
.browser { width: 2940px; height: 1661px; flex: none; border-radius: 20px 20px 22px 22px; overflow: hidden; position: relative; background: #282a27; box-shadow: 0 0 0 2px #000; }
.browser::after { content: ""; position: absolute; inset: 0; border-radius: inherit; box-shadow: inset 0 2px 1px #70736f, inset 2px 0 0 rgba(120,124,120,.5); pointer-events: none; }
.lights { display: flex; gap: 16px; }
.lights i { width: 24px; height: 24px; border-radius: 50%; background: #484c48; }
.tabstrip { height: 80px; display: flex; align-items: flex-end; }
.tabstrip .lights { padding: 0 0 27px 42px; width: 188px; }
.tab { width: 464px; height: 68px; background: #383c38; border-radius: 18px 18px 0 0; display: flex; align-items: center; padding: 0 24px 12px 17px; position: relative; }
.tab::before, .tab::after { content: ""; position: absolute; bottom: 0; width: 20px; height: 20px; }
.tab::before { left: -20px; background: radial-gradient(circle at 0 0, transparent 19.500px, #383c38 20px); }
.tab::after { right: -20px; background: radial-gradient(circle at 100% 0, transparent 19.500px, #383c38 20px); }
.tabtitle { margin-left: 17px; width: 338px; white-space: nowrap; font: 400 25px/34px Inter, sans-serif; letter-spacing: -.4px; color: #e4e6e3; -webkit-mask-image: linear-gradient(90deg, #000 88%, transparent 101%); mask-image: linear-gradient(90deg, #000 88%, transparent 101%); }
.tabx { margin-left: auto; }
.plus { margin: 0 0 29px 29px; }
.toolbar { height: 94px; background: #383c38; border-radius: 16px 16px 0 0; border-bottom: 2px solid #454845; display: flex; align-items: center; padding: 0 40px 0 31px; }
.navi { width: 28px; height: 28px; margin-right: 43.500px; fill: none; stroke: #868986; stroke-width: 2.600; }
.navi + .navi + .navi { margin-right: 38px; }
.omni { width: 2240px; height: 68px; border-radius: 34px; background: #252724; display: flex; align-items: center; padding: 0 16px 0 10px; }
.site { width: 48px; height: 48px; border-radius: 50%; background: #383c38; display: flex; align-items: center; justify-content: center; }
.url { margin-left: 16px; font: 400 28px Inter, sans-serif; color: #e6e8e5; letter-spacing: -.15px; }
.url em { color: #c2c4c1; }
.omni-end { display: flex; gap: 32px; margin-left: auto; }
.omni-end svg, .exts svg { fill: none; stroke: #cfd1ce; stroke-width: 3; }
.omni-end, .exts { opacity: .7; }
.exts { display: flex; align-items: center; margin-left: 42px; gap: 36px; }
.exts i { width: 2px; height: 28px; background: #777; }

/* canvas page */
.page { height: 1487px; display: flex; background: #fcfefc; overflow: hidden; }
.global { width: 168px; flex: none; background: #30332f; height: 1487px; color: #fff; }
.logo { height: 170px; display: flex; align-items: center; justify-content: center; padding: 2px 0 0 0; background: #f2f4f2; }
.logo svg { margin-left: -1px; }
.g { height: 125.700px; display: flex; flex-direction: column; align-items: center; position: relative; padding-top: 15px; font-size: 28px; line-height: 34px; }
.g svg { width: 52px; height: 52px; fill: none; stroke: currentColor; stroke-width: 3; }
.g svg .solid { fill: currentColor; stroke: none; }
.g span { margin-top: 9px; }
.acct { height: 145.500px; padding-top: 14px; }
.acct svg { width: 72px; height: 72px; stroke: none; }
.on { background: #fcfefc; color: #80203f; }
.badge { position: absolute; left: 92px; top: 3px; width: 40px; height: 40px; border-radius: 50%; background: #80203f; font: 400 22px/39px Lato, sans-serif; text-align: center; }
.doc { flex: 1; }
.crumbs { height: 144px; margin: 0 32px 0 48px; border-bottom: 2px solid #e3e5e4; display: flex; align-items: center; padding: 2px 0 0 12px; font-size: 36px; position: relative; }
.burger { margin-top: 3px; }
.c1 { color: #80203f; margin: 0 18px 0 56px; }
.c2 { margin-left: 18px; }
.toplinks { position: absolute; right: 0; top: 7px; display: flex; font-size: 28px; line-height: 36px; white-space: nowrap; gap: 28px; }
.toplinks a { text-decoration: underline; text-underline-offset: 4px; }
.cols { display: flex; }
.course { width: 384px; margin-left: 48px; flex: none; padding-top: 48px; margin-right: 48px; }
.term { padding: 1px 0 0 24px; height: 56px; font: italic 22px/32px Roboto, sans-serif; }
.course a { display: flex; align-items: center; height: 73.640px; padding-left: 12px; font-size: 32px; color: #80203f; position: relative; }
.course .cur { border-left: 4px solid #22303c; padding-left: 8px; font-weight: 700; color: #2a353e; }
.badge2 { position: absolute; left: 272px; width: 40px; height: 40px; border-radius: 50%; background: #80203f; color: #fff; font: 700 24px/39px Lato, sans-serif; text-align: center; }
.content { width: 1580px; flex: none; white-space: nowrap; }
.head { display: flex; justify-content: space-between; height: 293px; padding-top: 79px; }
h1 { margin: 0; font: 400 57.600px/72px Lato, sans-serif; }
.ally { margin: 42px 0 0 13px; }
.jump { text-align: right; font-size: 32px; line-height: 48px; color: #80203f; margin-top: 31px; }
p { margin: 0 0 24px; font-size: 32px; line-height: 48px; }
h3 { margin: 0 0 24px; height: 54px; font: 700 36px/55px Lato, sans-serif; }
.mail { color: #80203f; text-decoration: underline; text-underline-offset: 4px; }
.right { width: 480px; margin-left: 144px; flex: none; padding-top: 58px; font-family: Lato, sans-serif; white-space: nowrap; }
.btn { display: flex; align-items: center; gap: 8px; height: 84px; margin-bottom: 10px; padding: 0 0 3px 28px; border: 2px solid #e2e5e5; border-radius: 6px; background: #f2f4f4; font: 400 32px Roboto, sans-serif; }
.right h2 { margin: 32px 0 22px; height: 64px; border-bottom: 2px solid #e3e5e4; font: 700 32px/52px Lato, sans-serif; }
.todo { display: flex; padding-left: 50px; font-size: 28px; margin-bottom: 20px; }
.asg { width: 33px; height: 32px; margin: -2px 17px 0 0; }
.todo a { display: block; color: #80203f; text-decoration: underline; text-underline-offset: 4px; line-height: 35.600px; }
.todo b { display: block; color: #56646e; line-height: 35.600px; margin-top: 6px; }
.todo span { display: block; line-height: 39px; }
.x { width: 20px; height: 20px; margin: 8px 18px 0 auto; }
.right h2.grp { margin: -11px 0 18px; }
.lab { display: block; margin-left: 20px; font-size: 32px; line-height: 40px; color: #80203f; letter-spacing: 1px; }

/* dock */
.dock { width: 2726px; height: 146px; margin-top: 21px; flex: none; border: 2px solid #38444c; border-radius: 44px; background: #101b25; display: flex; padding: 0 0 0 3px; }
.app { width: 124px; flex: none; padding: 19px 15px 0; position: relative; }
.app > svg { width: 94px; height: 94px; }
.run::after { content: ""; position: absolute; left: 58px; top: 132px; width: 8px; height: 8px; border-radius: 50%; background: #949ca3; }
.sep { width: 2px; height: 106px; margin: 18px 27px 0; background: #47525b; flex: none; }
.count { position: absolute; right: 1px; top: 7px; min-width: 46px; height: 46px; border-radius: 23px; background: #e04a3a; color: #fff; font: 400 25px/46px Inter, sans-serif; text-align: center; letter-spacing: -1px; }
.count.wide { width: 66px; right: 0; }

/* recorder window */
.recorder { position: absolute; left: 2300px; top: 74px; width: 600px; height: 456px; border-radius: 20px; background: rgba(45,48,44,.94); box-shadow: 0 0 0 2px #0a0b0a, inset 0 0 0 2px #6a6d69, 0 36px 80px rgba(0,0,0,.6), 0 0 60px rgba(0,0,0,.25); display: flex; flex-direction: column; align-items: center; font-family: "Liberation Sans", sans-serif; }
.rtitle { width: 100%; height: 56px; border-bottom: 2px solid #050605; background: rgba(255,255,255,.03); border-radius: 20px 20px 0 0; display: flex; align-items: center; padding: 0 0 0 16px; font: 700 26px Inter, sans-serif; color: #a9aba8; }
.rtitle .lights i { background: #595b58; }
.rtitle b { margin-left: 48px; font-weight: 700; letter-spacing: -.1px; }
.rhead { display: flex; align-items: center; gap: 10px; height: 96px; padding-top: 5px; font-size: 38px; color: #2a3a50; margin-left: -4px; }
.rrec { display: flex; align-items: center; gap: 9px; font-size: 30px; color: #dd5a49; height: 60px; margin-top: 5px; }
.rrec i { width: 38px; height: 38px; border-radius: 50%; background: radial-gradient(circle at 50% 15%, #f09a92, #d43a2c 45%, #b92a1f); }
.rtime { font: 700 48px/56px "Liberation Sans", sans-serif; color: #3d4d63; margin-top: 20px; }
.rsub { display: flex; align-items: center; gap: 8px; font-size: 24px; color: #9daaa9; margin-top: 9px; height: 30px; }
.rbtns { display: flex; gap: 32px; margin-top: 40px; }
.rbtns div { height: 57px; display: flex; align-items: center; justify-content: center; gap: 10px; font-weight: 700; font-size: 30px; padding-top: 3px; }
.start { width: 266px; background: rgba(255,255,255,.44); border: 2px solid #757875; color: #b6b8b5; }
.start i { width: 17px; height: 17px; border-radius: 50%; background: #b6b8b5; }
.stop { width: 250px; background: linear-gradient(#aeb0ac, #c3c6c2); border: 2px solid #b9bbb8; color: #060706; }
.stop i { width: 15px; height: 15px; background: #060706; }

/* confirm dialog */
.dialog { position: absolute; left: 1265px; top: 438px; width: 409px; height: 308px; border-radius: 18px; background: rgba(116,118,117,.5); box-shadow: 0 0 0 1px rgba(90,90,90,.6), inset 0 0 0 2px rgba(225,228,225,.6), 0 16px 44px rgba(0,0,0,.18); display: flex; flex-direction: column; align-items: center; color: #fff; padding-top: 29px; }
.drk { width: 90px; height: 108px; opacity: .55; margin-left: -2px; }
.dialog p { margin: 27px 0 0; font: 800 21px/25px Inter, sans-serif; text-align: center; letter-spacing: -.2px; position: relative; left: -2px; }
.dbtns { display: flex; gap: 13px; margin: 24px 4px 0 0; }
.dbtns span { width: 173px; height: 44px; border-radius: 10px; background: rgba(235,238,235,.35); text-align: center; font: 500 22px/42px Inter, sans-serif; }
.dbtns .yes { background: rgba(90,150,255,.55); }
```
